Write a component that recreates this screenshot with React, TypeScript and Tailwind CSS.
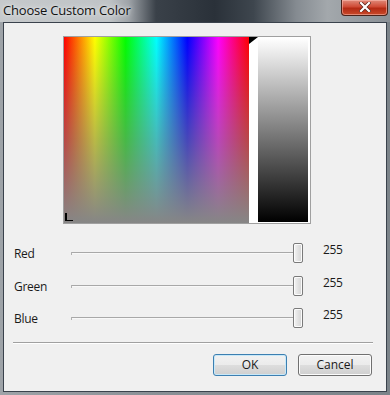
import React from "react";

const font = { fontFamily: '"Open Sans", "Noto Sans", sans-serif' };

function SliderRow({ label, mt }: { label: string; mt: string }) {
  return (
    <div className={`flex h-[20px] items-center ${mt}`}>
      <div className="ml-[10px] w-[57px] text-[12px] leading-[15px] text-[#1a1a1a] tracking-[-0.3px]">{label}</div>
      <div className="flex h-[20px] w-[232px] items-center">
        <div className="flex h-[3px] flex-1 items-center">
          <div className="h-[3px] w-[1px] bg-[#b0b0b0]" />
          <div className="h-[2px] flex-1 border-t border-[#a8a8a8] bg-[#f8f8f8]" />
        </div>
        <div className="h-[20px] w-[10px] rounded-[2px] border border-[#7a7a7a] bg-[linear-gradient(to_right,#f4f4f4,#e2e2e2_50%,#d4d4d4)] shadow-[inset_0_0_0_1px_#fbfbfb]" />
      </div>
      <div className="ml-[20px] -mt-[8px] text-[12px] leading-[15px] text-[#1a1a1a] tracking-[-0.3px]">255</div>
    </div>
  );
}

export default function App() {
  return (
    <div
      className="flex h-[395px] w-[390px] flex-col overflow-hidden bg-[linear-gradient(to_right,#9ea3a8,#8a9096_40%,#7b8389)]"
      style={font}
    >
      {/* Title bar */}
      <div className="relative flex h-[22px] items-start bg-[linear-gradient(to_right,#c6c9cb_0%,#bfc3c6_28%,#9ea3a8_33%,#3a4149_40%,#2a3139_55%,#3e464e_65%,#858b91_76%,#a3a8ac_84%,#8a9096_100%)]">
        <div className="ml-[3px] mt-[1px] text-[13px] leading-[18px] text-[#111] tracking-[-0.2px] [text-shadow:0_0_6px_#e8eaec,0_0_3px_#e8eaec]">
          Choose Custom Color
        </div>
        <div className="ml-auto mr-[2px] flex h-[16px] w-[47px] items-center justify-center rounded-b-[4px] border border-t-0 border-[#4b2219] bg-[linear-gradient(to_bottom,#e08a7a,#cf4a35_45%,#b42a14_55%,#c84a2a)] shadow-[inset_0_0_0_1px_rgba(255,200,190,0.5)]">
          <svg width="12" height="10" viewBox="0 0 12 10" className="-mt-[2px]">
            <path d="M2 1 L10 9 M10 1 L2 9" stroke="#5a2318" strokeWidth="3.6" strokeLinecap="square" />
            <path d="M2 1 L10 9 M10 1 L2 9" stroke="#ffffff" strokeWidth="2.2" strokeLinecap="square" />
          </svg>
        </div>
      </div>

      {/* Client area */}
      <div className="mb-[3px] ml-[3px] mr-[3px] flex flex-1 flex-col border border-[#3a424c] bg-[#f0f0f0]">
        {/* Color frame */}
        <div className="ml-[59px] mt-[13px] flex h-[188px] w-[248px] border border-[#a0a0a0] bg-white">
          <div className="h-full w-[185px] bg-[linear-gradient(to_right,#ff0000,#ffff00,#00ff00,#00ffff,#0000ff,#ff00ff,#ff0000)]">
            <div className="flex h-full w-full flex-col justify-end bg-[linear-gradient(to_bottom,rgba(128,128,128,0),rgba(128,128,128,0.55)_55%,#868686)]">
              <svg width="9" height="9" viewBox="0 0 9 9" className="mb-[1px] ml-[1px]">
                <path d="M0 0 V8 H8 V7 H2 V0 Z" fill="#000" />
              </svg>
            </div>
          </div>
          <div className="w-[9px]">
            <svg width="9" height="8" viewBox="0 0 9 8">
              <polygon points="0,0 9,0 0,7" fill="#000" />
            </svg>
          </div>
          <div className="mb-[1px] mt-[1px] w-[50px] bg-[linear-gradient(to_bottom,#ffffff,#7f7f7f_50%,#000000)]" />
        </div>

        {/* Sliders */}
        <div className="mt-[19px] flex flex-col">
          <SliderRow label="Red" mt="" />
          <SliderRow label="Green" mt="mt-[13px]" />
          <SliderRow label="Blue" mt="mt-[12px]" />
        </div>

        {/* Separator */}
        <div className="ml-[9px] mr-[13px] mt-[14px] h-[2px] border-t border-[#a0a0a0] border-b border-b-white" />

        {/* Buttons */}
        <div className="mr-[14px] mt-[10px] flex justify-end gap-[11px]">
          <div className="flex h-[22px] w-[74px] items-center justify-center rounded-[3px] border border-[#3c7fb1] bg-[linear-gradient(to_bottom,#f2f2f2_0%,#ebebeb_50%,#dddddd_51%,#cfcfcf_100%)] text-[12px] text-[#1a1a1a] shadow-[inset_0_0_0_1px_#c8e8f8]">
            OK
          </div>
          <div className="flex h-[22px] w-[74px] items-center justify-center rounded-[3px] border border-[#707070] bg-[linear-gradient(to_bottom,#f2f2f2_0%,#ebebeb_50%,#dddddd_51%,#cfcfcf_100%)] text-[12px] text-[#1a1a1a] shadow-[inset_0_0_0_1px_#fcfcfc]">
            Cancel
          </div>
        </div>
      </div>
    </div>
  );
}
